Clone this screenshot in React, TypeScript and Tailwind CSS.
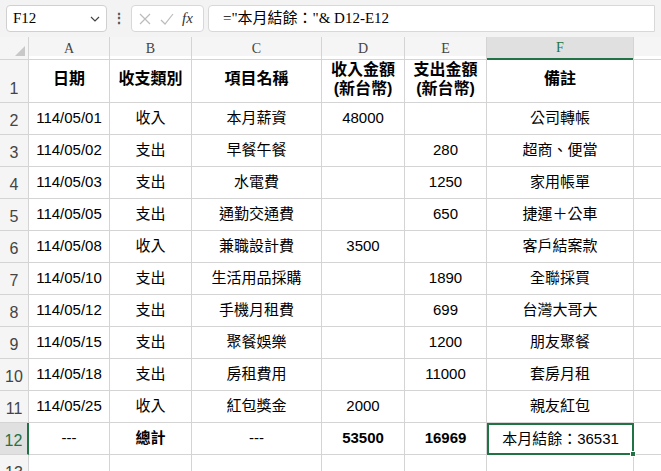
import React from "react";

const rows: string[][] = [
  ["114/05/01","收入","本月薪資","48000","","公司轉帳"],
  ["114/05/02","支出","早餐午餐","","280","超商、便當"],
  ["114/05/03","支出","水電費","","1250","家用帳單"],
  ["114/05/05","支出","通勤交通費","","650","捷運＋公車"],
  ["114/05/08","收入","兼職設計費","3500","","客戶結案款"],
  ["114/05/10","支出","生活用品採購","","1890","全聯採買"],
  ["114/05/12","支出","手機月租費","","699","台灣大哥大"],
  ["114/05/15","支出","聚餐娛樂","","1200","朋友聚餐"],
  ["114/05/18","支出","房租費用","","11000","套房月租"],
  ["114/05/25","收入","紅包獎金","2000","","親友紅包"],
];
const grid = "grid grid-cols-[29px_81px_82px_130px_83px_82px_147px_1fr]";
const cell = "border-r border-b border-[#d4d4d4] flex items-center justify-center text-[15px] text-black";
const rh = "border-r border-b border-[#d4d4d4] bg-[#f5f5f5] flex items-end justify-center pb-[1px] text-[16px] text-[#444] font-['Liberation_Serif',serif]";

export default function App() {
  return (
    <div className="w-[661px] h-[471px] overflow-hidden bg-white" style={{ fontFamily: '"Liberation Sans","Noto Sans CJK TC",sans-serif' }}>
      <div className="h-[37px] bg-[#f3f3f3] flex items-center px-[6px] gap-[4px]">
        <div className="w-[101px] h-[27px] bg-white border border-[#d0d0d0] rounded-[4px] flex items-center justify-between px-[6px] text-[15px]" style={{ fontFamily: '"Liberation Serif",serif' }}>
          <span>F12</span>
          <svg width="10" height="6" viewBox="0 0 10 6"><path d="M1 1l4 4 4-4" stroke="#444" fill="none" strokeWidth="1.2" /></svg>
        </div>
        <span className="w-[16px] text-center text-[#555] font-bold text-[14px]">⋮</span>
        <div className="w-[73px] h-[27px] bg-white border border-[#d8d8d8] rounded-[4px] flex items-center gap-[8px] px-[6px]">
          <svg width="14" height="14" viewBox="0 0 14 14"><path d="M2 2l10 10M12 2L2 12" stroke="#bbb" strokeWidth="1.2" /></svg>
          <svg width="14" height="14" viewBox="0 0 14 14"><path d="M1 8l4 4 8-10" stroke="#bbb" fill="none" strokeWidth="1.2" /></svg>
          <span className="italic text-[15px] text-[#333]" style={{ fontFamily: '"Liberation Serif",serif' }}>fx</span>
        </div>
        <div className="flex-1 h-[27px] bg-white border border-[#d8d8d8] rounded-l-[4px] flex items-center pl-[14px] text-[15px]" style={{ fontFamily: '"Liberation Serif","Noto Sans CJK TC",serif' }}>
          ="本月結餘："&amp; D12-E12
        </div>
      </div>
      <div className={`${grid} h-[19px] bg-[#f5f5f5]`}>
        <div className="border-r border-b border-[#d4d4d4] relative">
          <svg className="absolute right-[3px] bottom-[3px]" width="10" height="10"><path d="M10 0L10 10L0 10Z" fill="#c8c8c8" /></svg>
        </div>
        {["A","B","C","D","E"].map(c => <div key={c} className="border-r border-b border-[#d4d4d4] flex items-center justify-center text-[14px] text-[#444]" style={{ fontFamily: '"Liberation Serif",serif' }}>{c}</div>)}
        <div className="border-r border-[#d4d4d4] border-b-2 border-b-[#217346] bg-[#e0e0e0] flex items-center justify-center text-[14px] text-[#217346]" style={{ fontFamily: '"Liberation Serif",serif' }}>F</div>
        <div className="border-b border-[#d4d4d4]"></div>
      </div>
      <div className={`${grid} h-[47px]`}>
        <div className={rh}>1</div>
        <div className={`${cell} font-bold text-[16px]`}>日期</div>
        <div className={`${cell} font-bold text-[16px]`}>收支類別</div>
        <div className={`${cell} font-bold text-[16px]`}>項目名稱</div>
        <div className={`${cell} font-bold text-[16px] flex-col leading-[19px]`}><span>收入金額</span><span>(新台幣)</span></div>
        <div className={`${cell} font-bold text-[16px] flex-col leading-[19px]`}><span>支出金額</span><span>(新台幣)</span></div>
        <div className={`${cell} font-bold text-[16px]`}>備註</div>
        <div className="border-b border-[#d4d4d4]"></div>
      </div>
      {rows.map((r, i) => (
        <div key={i} className={`${grid} h-[32px]`}>
          <div className={rh}>{i + 2}</div>
          {r.map((v, j) => <div key={j} className={cell}>{v}</div>)}
          <div className="border-b border-[#d4d4d4]"></div>
        </div>
      ))}
      <div className={`${grid} h-[32px]`}>
        <div className="border-r-2 border-r-[#217346] border-b border-[#d4d4d4] bg-[#e0e0e0] flex items-end justify-center pb-[1px] text-[16px] text-[#217346] font-['Liberation_Serif',serif]">12</div>
        <div className={cell}>---</div>
        <div className={`${cell} font-bold`}>總計</div>
        <div className={cell}>---</div>
        <div className={`${cell} font-bold`}>53500</div>
        <div className={`${cell} font-bold`}>16969</div>
        <div className="relative border-2 border-[#217346] flex items-center justify-center text-[15px]">本月結餘：36531
          <div className="absolute right-[-4px] bottom-[-4px] w-[6px] h-[6px] bg-[#217346] border border-white"></div>
        </div>
        <div className="border-b border-[#d4d4d4]"></div>
      </div>
      <div className={`${grid} h-[32px]`}>
        <div className={rh}>13</div>
        {[0,1,2,3,4,5].map(j => <div key={j} className="border-r border-[#d4d4d4]"></div>)}
      </div>
    </div>
  );
}
